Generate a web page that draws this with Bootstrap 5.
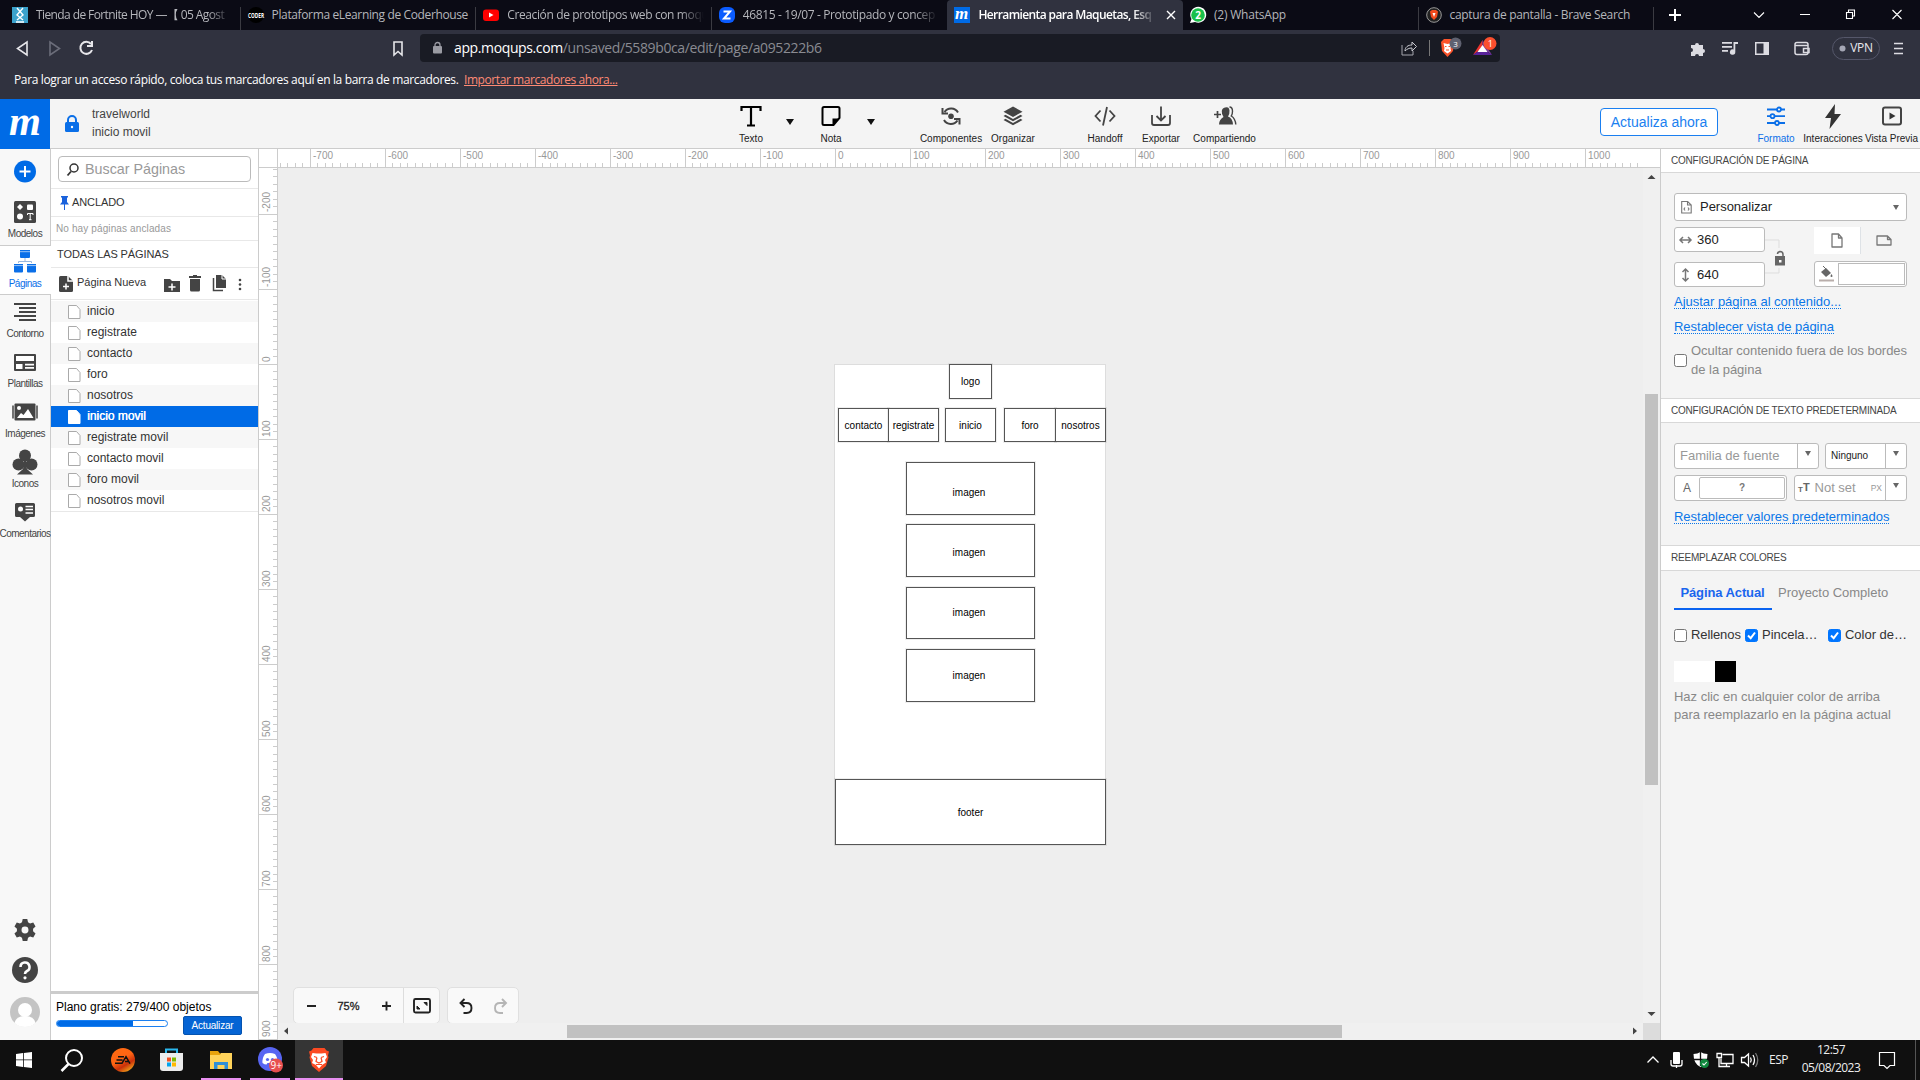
<!DOCTYPE html>
<html lang="es">
<head>
<meta charset="utf-8">
<title>Herramienta para Maquetas</title>
<link href="https://cdn.jsdelivr.net/npm/bootstrap@5.3.0/dist/css/bootstrap.min.css" rel="stylesheet">
<style>
body{width:1920px;height:1080px;overflow:hidden;font-family:"Liberation Sans",sans-serif;font-size:12px;line-height:1.2;color:#333;background:#eee}
svg{display:block;flex:none;overflow:visible}
.seg{font-family:"Open Sans","Noto Sans",sans-serif}
.nw{white-space:nowrap}
/* browser */
.tabs{height:30px;background:#0b0b15;padding-left:5px}
.tabx{width:235.6px;height:30px;padding:0 5px 0 7px;color:#b5b6bb;font-size:12px;position:relative;letter-spacing:-.37px}
.tabx .ttl{margin-left:8px;white-space:nowrap;flex:1}
.tabx.cut .ttl{-webkit-mask-image:linear-gradient(90deg,#000 86%,transparent 98%);mask-image:linear-gradient(90deg,#000 86%,transparent 98%)}
.tabx.sep::after{content:"";position:absolute;right:0;top:7px;bottom:0;width:1px;background:#3b3b42}
.tabx.on{background:#30323f;color:#fff;font-weight:600;border-radius:4px 4px 0 0;letter-spacing:-.6px}
.addr{height:36px;background:#30323f}
.url{width:1080px;height:28px;margin-left:16px;background:#191b24;border-radius:4px;color:#8a8b92;font-size:14px}
.bmk{height:33px;background:#30323f;color:#fff;font-size:12px;padding:7px 0 0 14px;letter-spacing:-.36px}
.bmk a{color:#ff8a75;letter-spacing:-.42px}
.vpn{width:48px;height:23px;border:1px solid #55576a;border-radius:12px;color:#e8e8ee;font-size:12px}
/* app header */
.apphd{height:50px;background:#f4f4f4;border-bottom:1px solid #ccc}
.logo{width:50px;height:50px;background:#006be6;color:#fff;font:italic bold 41px/44px "Liberation Serif",serif;text-align:center}
.tool{font-size:10px;color:#222;text-align:center;white-space:nowrap;display:flex;flex-direction:column;align-items:center;height:49px;padding-top:6px}
.tool svg{margin-bottom:6px}
.tool.blue{color:#0a6fe8}
.dn{width:0;height:0;border:4px solid transparent;border-top:6px solid #111;border-bottom:0}
.upg{width:118px;height:28px;border:1px solid #1a7ff0;border-radius:4px;background:#fff;color:#1a7ff0;font-size:14px;padding:0}
/* rail */
.work{height:891px}
.rail{width:51px;background:#f8f8f8;border-right:1px solid #ccc;font-size:10px;color:#444}
.ritem{height:50px;width:50px;display:flex;flex-direction:column;align-items:center;justify-content:flex-end;padding-bottom:5px;letter-spacing:-.5px;white-space:nowrap}
.ritem .ic{height:24px;display:flex;align-items:center;margin-bottom:4px}
.ritem.on{width:51px;background:#fff;border-top:1px solid #ccc;border-bottom:1px solid #ccc;color:#0a6fe8;padding:0 1px 4px 0}
/* pages */
.pages{width:207px;background:#fff}
.bb{border-bottom:1px solid #e8e8e8}
.srch{width:193px;height:26px;margin:6px 0 7px 7px;border:1px solid #bbb;border-radius:4px;font-size:14.3px;color:#999}
.prow{height:21px;padding-left:17px;color:#333}
.prow:nth-child(odd){background:#f7f7f7}
.prow.on{background:#006be6;color:#fff;text-shadow:.4px 0 #fff}
.plan{border-top:3px solid #ccc;height:49px;padding:6px 16px 0 5px;color:#000}
.pbar{width:112px;height:7px;border:1px solid #1a7ff0;border-radius:4px;background:#fff}
.pbar .progress-bar{background:#006be6}
.upd{width:59px;height:19px;background:#0564d4;border:1px solid #0453b0;border-radius:2px;color:#fff;font-size:10px;line-height:17px;text-align:center;letter-spacing:-.2px}
/* canvas */
.canv{position:relative;background:#eee;overflow:hidden}
.sheet{position:absolute;left:556px;top:196px;width:272px;height:481px;background:#fff;border:1px solid #ddd}
.bx{position:absolute;border:1px solid #555;background:#fff;color:#000;font-size:10px;display:flex;align-items:center;justify-content:center;outline:1px solid #0001}
.ctl{position:absolute;top:819px;height:37px;background:#f9f9f9;border:1px solid #e0e0e0;border-radius:5px;color:#222}
.vsc{width:17px;background:#f0f0f0}
.hsc{height:17px;background:#f0f0f0}
/* right panel */
.props{width:260px;background:#f4f4f4;border-left:1px solid #ccc;font-size:13px;letter-spacing:-.02px}
.sech{background:#fff;border-bottom:1px solid #d8d8d8;font-size:10px;letter-spacing:-.22px;color:#444;padding-left:10px;display:flex;align-items:center}
.fld{background:#fff;border:1px solid #bbb;border-radius:3px;display:flex;align-items:center;color:#222}
.ddv{width:21px;border-left:1px solid #bbb;height:100%;display:flex;justify-content:center;padding-top:7px}
.tri{width:0;height:0;border:3.5px solid transparent;border-top:5px solid #666;border-bottom:0}
.dlk{color:#0a76e8;border-bottom:1px dotted #0a76e8;line-height:16px;height:15px;align-self:flex-start;white-space:nowrap}
.ck{width:13px;height:13px;border:1px solid #767676;border-radius:2.5px;background:#fff;flex:none}
.ck.on{background:#0075ff;border-color:#0075ff}
/* taskbar */
.task{height:40px;background:#101010;color:#eee}
.tk{height:40px;display:flex;align-items:center;justify-content:center}
.run{border-bottom:2px solid #e88ff0;padding-top:2px}
</style>
<script src="https://cdn.jsdelivr.net/npm/bootstrap@5.3.0/dist/js/bootstrap.bundle.min.js"></script>
</head>
<body>
<div class="tabs d-flex seg">
  <div class="tabx sep cut d-flex align-items-center"><svg width="16" height="16"><rect width="16" height="16" fill="#3ba2cc"/><path d="M5 1l6 7-6 5M11 1L5 8l6 5M4 15h8" stroke="#fff" stroke-width="1.4" fill="none"/></svg><span class="ttl" style="letter-spacing:-.6px">Tienda de Fortnite HOY —【 05 Agost</span></div>
  <div class="tabx sep d-flex align-items-center"><svg width="16" height="16"><circle cx="8" cy="8" r="8" fill="#000"/><text x="0" y="11" font-size="7" font-weight="700" textLength="16" lengthAdjust="spacingAndGlyphs" fill="#fff" letter-spacing="0">CODER</text></svg><span class="ttl">Plataforma eLearning de Coderhouse</span></div>
  <div class="tabx sep cut d-flex align-items-center"><svg width="16" height="16"><rect y="2.500" width="16" height="11.500" rx="3" fill="#f00"/><path d="M6 5.500v5l4.500-2.500z" fill="#fff"/></svg><span class="ttl">Creación de prototipos web con moqu</span></div>
  <div class="tabx cut d-flex align-items-center"><svg width="16" height="16"><rect width="16" height="16" rx="6" fill="#0b5cff"/><path d="M4.500 4.500h6.500L5 11.500h6.500" stroke="#fff" stroke-width="2" fill="none"/></svg><span class="ttl">46815 - 19/07 - Prototipado y concep</span></div>
  <div class="tabx on cut d-flex align-items-center"><svg width="16" height="16"><rect width="16" height="16" fill="#006be6"/><text x="1" y="12" font-family="Liberation Serif" font-style="italic" font-weight="700" font-size="17" fill="#fff">m</text></svg><span class="ttl">Herramienta para Maquetas, Esq</span><svg width="8" height="8" style="margin:0 3px 0 8px"><path d="M0 0l8 8M8 0L0 8" stroke="#fff" stroke-width="1.400"/></svg></div>
  <div class="tabx sep d-flex align-items-center"><svg width="16" height="16"><path d="M0 16l1.500-4A8 8 0 1 1 5 15z" fill="#fff"/><circle cx="8" cy="8" r="6.800" fill="#19c04a"/><text x="5.200" y="11.800" font-size="10" font-weight="700" fill="#fff">2</text></svg><span class="ttl" style="letter-spacing:-.2px">(2) WhatsApp</span></div>
  <div class="tabx sep d-flex align-items-center"><svg width="16" height="16"><circle cx="8" cy="8" r="7.300" fill="#222" stroke="#999"/><path d="M4 4.500l2-1.500h4l2 1.500-1 5.500-3 3-3-3z" fill="#f24a1d"/><path d="M6.500 6h3L8 10z" fill="#fff"/></svg><span class="ttl" style="letter-spacing:-.33px">captura de pantalla - Brave Search</span></div>
  <svg width="265" height="30" fill="none" stroke="#fff"><path d="M15 15h12M21 9v12" stroke-width="2"/><path d="M100 12.500l5 5 5-5M146 14.500h10M192.500 12.500h6v6h-6zM194.500 12v-2h6v6h-2M238.500 10l9 9M247.500 10l-9 9" stroke-width="1.100"/></svg>
</div>
<div class="addr d-flex align-items-center seg">
  <svg width="404" height="36" fill="none" stroke="#e6e6ea" stroke-width="1.600"><path d="M27 12v13l-9.500-6.500z"/><path d="M50 12v13l9.500-6.500z" stroke="#6b6d7a"/><path d="M91 14a6 6 0 1 0 1 6M92 11v5h-5" stroke-width="2"/><path d="M394 12h8v13l-4-3.500-4 3.500z"/></svg>
  <div class="url d-flex align-items-center">
    <svg width="10" height="12" style="margin:0 11px 0 13px"><rect y="4" width="9" height="7.500" rx="1" fill="#9a9ba3"/><path d="M2 5V3a2.500 2.500 0 0 1 5 0v2" fill="none" stroke="#9a9ba3" stroke-width="1.300"/></svg>
    <span class="nw" style="letter-spacing:-.38px"><span class="text-white">app.moqups.com</span>/unsaved/5589b0ca/edit/page/a095222b6</span>
    <svg width="98" height="28" class="ms-auto" fill="none"><path d="M0 11v10h11v-4" stroke="#a5a6ad"/><path d="M3 17c0-4 3-6 7-6V8l4.500 4.500L10 17v-3c-3 0-5 1-7 3z" stroke="#c9cad0"/><path d="M27.500 6v16" stroke="#777"/>
      <path d="M39 8l3-3h7l3 3-1 9-5.500 6L40 17z" fill="#fb542b"/><path d="M41.500 9l4 1 4-1-1 5 .5 3-3.500 2.500-3.500-2.500.500-3z" fill="#fff"/><path d="M43 12.500h1.500M46.500 12.500H48M44 16h3" stroke="#fb542b"/><circle cx="53.500" cy="9.500" r="6" fill="#5f6170"/><text x="51.200" y="12.500" font-size="8" fill="#fff">3</text>
      <path d="M80.500 6l-9.500 15 9.500-7z" fill="#e8322d"/><path d="M80.500 6l9.500 15-9.500-7z" fill="#7d3c9b"/><path d="M71 21h19l-5.500-4h-8z" fill="#59239b"/><path d="M80.500 11l-5 7h10z" fill="#fff"/><circle cx="88" cy="9.500" r="6.500" fill="#fb4f2e"/><text x="85.700" y="13" font-size="9" fill="#fff">1</text></svg>
  </div>
  <svg width="332" height="36" fill="#dcdce2" stroke="none"><path d="M191 15h4a2 2 0 1 1 4 0h4v4a2 2 0 1 1 0 4v3h-4a2 2 0 0 0-4 0h-4v-4a2 2 0 0 0 0-4z"/><path d="M222 12h10v1.700h-10zM222 16h10v1.700h-10zM222 20h6v1.700h-6zM233.500 12h4.500v2h-2.700v8a2.700 2.700 0 1 1-1.800-2.500z"/><path d="M255 12h14v13h-14zm1.500 1.500v10h7v-10z" fill-rule="evenodd"/><g fill="none" stroke="#dcdce2" stroke-width="1.500"><rect x="295" y="12.500" width="13" height="12" rx="2"/><path d="M295 15.500h13M309 18.500h-5.500v4h5.500z"/></g></svg>
  <div class="vpn d-flex align-items-center justify-content-center nw" style="letter-spacing:-.3px"><svg width="7" height="7" class="me-1"><circle cx="3.500" cy="3.500" r="3" fill="#a5a7b5"/></svg>VPN</div>
  <svg width="40" height="36"><path d="M14 13.500h9M14 18.500h9M14 23.500h9" stroke="#dcdce2" stroke-width="1.700"/></svg>
</div>
<div class="bmk nw seg">Para lograr un acceso rápido, coloca tus marcadores aquí en la barra de marcadores.&nbsp; <a href="#">Importar marcadores ahora...</a></div>

<header class="apphd d-flex">
  <div class="logo">m</div>
  <svg width="42" height="49"><rect x="15" y="23" width="14" height="10" rx="1.500" fill="#0a6fe8"/><path d="M18 24v-3a4 4 0 0 1 8 0v3" fill="none" stroke="#0a6fe8" stroke-width="2"/><circle cx="22" cy="28" r="1.200" fill="#fff"/></svg>
  <div class="nw" style="width:639px;padding-top:7px;line-height:17.500px;color:#444">travelworld<br>inicio movil</div>
  <div class="tool" style="width:40px"><svg width="22" height="22"><path d="M1.500 6V2h19v4M11 2v18M7 20.500h8" fill="none" stroke="#000" stroke-width="2.200"/></svg>Texto</div>
  <div class="d-flex justify-content-center" style="width:38px;padding-top:20px"><i class="dn"></i></div>
  <div class="tool" style="width:44px"><svg width="20" height="22"><path d="M1.500 3.500q0-1.500 1.500-1.500h14q1.500 0 1.500 1.500V13l-6 7H3q-1.500 0-1.500-1.500z" fill="none" stroke="#000" stroke-width="2"/><path d="M11.500 20.500v-7h7z"/></svg>Nota</div>
  <div class="d-flex justify-content-center" style="width:36px;padding-top:20px"><i class="dn"></i></div>
  <div class="tool" style="width:62px;margin-left:31px"><svg width="20" height="22" fill="none" stroke="#444" stroke-width="2"><path d="M3.500 7A8 8 0 0 1 17 7.500M1.500 3v5.500H7M16.500 15.500A8 8 0 0 1 3 15M18.500 19.500V14H13"/><circle cx="10" cy="11.200" r="2.800" fill="#444" stroke="none"/></svg>Componentes</div>
  <div class="tool" style="width:62px"><svg width="20" height="22" fill="#444"><path d="M10 1.500l9.500 5.300L10 12 .5 6.800z"/><path d="M.5 11l2-1.200L10 14l7.500-4.200 2 1.200L10 16.300zM.5 15l2-1.200L10 18l7.500-4.200 2 1.200L10 20.300z"/></svg>Organizar</div>
  <div class="tool" style="width:60px;margin-left:31px"><svg width="22" height="22" fill="none" stroke="#444" stroke-width="1.800"><path d="M6.500 5.500L1.500 11l5 5.500M15.500 5.500l5 5.500-5 5.500M13 2L9 20.500"/></svg>Handoff</div>
  <div class="tool" style="width:52px"><svg width="20" height="22" fill="none" stroke="#444" stroke-width="1.800"><path d="M1 10v8q0 2 2 2h14q2 0 2-2v-8M10 1.500V15M5.500 11l4.500 4.500 4.500-4.500"/></svg>Exportar</div>
  <div class="tool" style="width:75px"><svg width="24" height="22" fill="#444"><path d="M1 9.500h7M4.500 6v7" stroke="#444" stroke-width="1.700"/><path d="M12 2.500q4-1.500 4.500 3 .3 3.500-1.500 6 4.500 1.500 5 8H6q0-5 4.500-7.500-2-3-1.700-6 .3-3 3.200-3.500z"/><path d="M16.500 2q3 0 3 4.200 0 3-1.200 4.800 4 2.500 4.500 8.500" fill="none" stroke="#444" stroke-width="1.400"/></svg>Compartiendo</div>
  <button class="btn upg" style="margin:9px 0 0 338px">Actualiza ahora</button>
  <div class="tool blue" style="width:44px;margin-left:36px"><svg width="18" height="22" fill="#f4f4f4" stroke="#0a6fe8" stroke-width="1.800"><path d="M0 4.500h18M0 11.200h18M0 18h18"/><circle cx="12" cy="4.500" r="2"/><circle cx="5.500" cy="11.200" r="2"/><circle cx="10" cy="18" r="2"/></svg>Formato</div>
  <div class="tool" style="width:58px;margin-left:6px"><svg width="18" height="22" fill="#333"><path d="M11-1L1 13h6L5.500 24 17 9h-6.500z"/></svg>Interacciones</div>
  <div class="tool" style="width:57px;margin-left:1px"><svg width="20" height="22"><rect x="1" y="2.500" width="18" height="17" rx="2" fill="none" stroke="#444" stroke-width="2"/><path d="M7.500 7.500v7l6-3.500z" fill="#333"/></svg>Vista Previa</div>
</header>

<div class="work d-flex">
  <nav class="rail d-flex flex-column">
    <div style="height:46px;padding:11px 0 0 14px"><svg width="22" height="22"><circle cx="11" cy="11.500" r="11" fill="#006be6"/><path d="M5.500 11.500h11M11 6v11" stroke="#fff" stroke-width="2"/></svg></div>
    <div class="ritem"><span class="ic"><svg width="22" height="22"><rect width="22" height="22" rx="1.500" fill="#444"/><path d="M6 3l3 3-3 3-3-3z" fill="#fff"/><rect x="13" y="3.500" width="6" height="5.500" rx="1" fill="#fff"/><circle cx="6" cy="15.500" r="3" fill="#fff"/><path d="M13.500 14v-1.500h5.500V14M16.200 12.500V19M15 18.700h2.500" stroke="#fff" fill="none"/></svg></span>Modelos</div>
    <div class="ritem on"><span class="ic"><svg width="22" height="24" fill="#0a6fe8"><path d="M6 0h10v7q0 1-1 1H7q-1 0-1-1zM0 14h9v7.500q0 1-1 1H1q-1 0-1-1zM13 14h9v7.500q0 1-1 1h-7q-1 0-1-1z"/><path d="M6 1.700h10M0 15.600h9M13 15.600h9" stroke="#fff" stroke-width=".6"/><path d="M4.500 13v-1.500h13V13M11 8v3.500" fill="none" stroke="#9ab8dd"/></svg></span>Páginas</div>
    <div class="ritem"><span class="ic"><svg width="22" height="18"><path d="M0 1h22M5 5h17M5 9h17M0 13h22M5 17h17" stroke="#444" stroke-width="2"/></svg></span>Contorno</div>
    <div class="ritem"><span class="ic"><svg width="22" height="17"><rect width="22" height="17" rx="1" fill="#444"/><path d="M2 2h18v5H2zM2 10h6.500v5H2zM11 9.800h9v1.600h-9zM11 13h9v1.800h-9z" fill="#fff"/></svg></span>Plantillas</div>
    <div class="ritem"><span class="ic"><svg width="26" height="18"><path d="M1 2.500v13M25 2.500v13" stroke="#444" stroke-width="1.500"/><rect x="2.500" y=".5" width="21" height="17" rx="1" fill="#444"/><circle cx="7" cy="5" r="2" fill="#fff"/><path d="M5 15l4-5 2.500 2L16 6l5.500 9z" fill="#fff"/></svg></span>Imágenes</div>
    <div class="ritem"><span class="ic"><svg width="26" height="26" fill="#444"><circle cx="13" cy="6.500" r="6"/><circle cx="6.500" cy="15.500" r="6"/><circle cx="19.500" cy="15.500" r="6"/><path d="M12 10h2v5l1 5 6 5.500H5L11 20l1-5z"/></svg></span>Iconos</div>
    <div class="ritem"><span class="ic"><svg width="20" height="19"><path d="M1.500 0h17q1.500 0 1.500 1.500v11q0 1.500-1.500 1.500H15l-5 4.500L5 14H1.500Q0 14 0 12.500v-11Q0 0 1.500 0z" fill="#444"/><circle cx="5.500" cy="6" r="2.500" fill="#fff"/><path d="M10.500 3.500H18M10.500 6.500H18M10.500 10H18" stroke="#fff" stroke-width="1.300"/></svg></span>Comentarios</div>
    <div class="mt-auto d-flex flex-column align-items-center" style="height:121px;width:50px">
      <svg width="22" height="22" viewBox="0 0 24 24"><path fill="#444" fill-rule="evenodd" d="M9.500 0h5l.8 3.600 2.200 1.300 3.500-1.200 2.500 4.400-2.700 2.400v2.900l2.700 2.500-2.500 4.300-3.500-1.100-2.200 1.300-.8 3.600h-5l-.8-3.600-2.200-1.300L3 20.200.5 15.900l2.700-2.500v-2.900L.5 8.100 3 3.700l3.500 1.200 2.200-1.300zM12 8.200a3.800 3.800 0 1 0 0 7.600 3.800 3.800 0 0 0 0-7.600z"/></svg>
      <svg width="26" height="26" style="margin-top:16px"><circle cx="13" cy="13" r="13" fill="#444"/><path d="M8.500 10a4.500 4.500 0 1 1 6.500 4q-2 1-2 3" fill="none" stroke="#fff" stroke-width="2.600"/><circle cx="13" cy="20.800" r="1.600" fill="#fff"/></svg>
      <svg width="30" height="30" style="margin-top:14px"><circle cx="15" cy="15" r="15" fill="#c4c4c4"/><circle cx="15" cy="13" r="7" fill="#fff"/><path d="M4.500 26Q6 19 15 19t10.500 7q-4 4-10.500 4T4.500 26z" fill="#fff"/></svg>
    </div>
  </nav>

  <aside class="pages d-flex flex-column">
    <div class="bb" style="height:40px;padding-top:1px"><div class="srch d-flex align-items-center" style="padding-top:1px"><svg width="26" height="22"><circle cx="15" cy="9" r="4" fill="none" stroke="#333" stroke-width="1.500"/><path d="M12 12.500l-3.500 4" stroke="#333" stroke-width="1.800"/></svg>Buscar Páginas</div></div>
    <div class="bb d-flex align-items-center" style="height:28px;font-size:11px;padding-left:9px;letter-spacing:-.1px"><svg width="9" height="14" style="margin-right:3px"><path d="M1 0h7v1.500H7V6l2 2.500H0L2 6V1.500H1zM4 8.500h1V14H4z" fill="#1a62dc"/></svg>ANCLADO</div>
    <div class="bb d-flex align-items-center" style="height:24px;font-size:10px;padding-left:5px;color:#999;letter-spacing:.12px">No hay páginas ancladas</div>
    <div class="bb d-flex align-items-center" style="height:27px;font-size:11px;padding:2px 0 0 6px;letter-spacing:-.1px">TODAS LAS PÁGINAS</div>
    <div class="bb d-flex align-items-center" style="height:32px;font-size:11px;padding:0 12px 2px 8px">
      <svg width="14" height="16" style="margin:2px 4px 0 0"><path d="M1.500 0H9l5 5v9.500q0 1.500-1.500 1.500h-11Q0 16 0 14.500v-13Q0 0 1.500 0z" fill="#444"/><path d="M9 0v5h5M4 10.500h6M7 7.500v6" stroke="#fff" stroke-width="1.500" fill="none"/></svg><span class="nw">Página Nueva</span>
      <svg width="82" height="18" class="ms-auto" fill="#444"><path d="M0 5h6l2 2h8v11H0z"/><path d="M4.500 13h7M8 9.500v7" stroke="#fff" stroke-width="1.500"/><path d="M25 2h4V1h4v1h4v2H25zM26 5h10v11q0 1.500-1.500 1.500h-7Q26 17.500 26 16z"/><path d="M52 1h6l4 4v9H52z"/><path d="M49.500 4v12.500H59" fill="none" stroke="#444" stroke-width="1.500"/><path d="M58 1v4h4" fill="none" stroke="#fff"/><circle cx="76" cy="6" r="1.300"/><circle cx="76" cy="10.500" r="1.300"/><circle cx="76" cy="15" r="1.300"/></svg></div>
    <div style="padding-top:1px" class="flex-grow-1"><div id="plist" class="bb"></div></div>
    <div class="plan"><div class="nw">Plano gratis: 279/400 objetos</div>
      <div class="d-flex justify-content-between"><div class="progress pbar" style="margin-top:6px"><div class="progress-bar" style="width:69%"></div></div><div class="upd" style="margin-top:2px">Actualizar</div></div></div>
  </aside>

  <main class="d-flex flex-column" style="width:1402px">
    <svg id="hrul" width="1402" height="19" style="background:#fff"></svg>
    <div class="d-flex" style="height:872px">
      <svg id="vrul" width="20" height="872" style="background:#fff"></svg>
      <div style="width:1365px">
        <div class="canv" style="height:855px">
          <div class="sheet"></div><div id="nodes"></div>
          <div class="ctl d-flex align-items-center" style="left:15px;width:147px"><svg width="146" height="35" fill="none" stroke="#222" stroke-width="1.900"><path d="M13 18h9M88 18h9M92.500 13.500v9"/><path d="M109.500 0v35" stroke="#ddd" stroke-width="1"/><rect x="120" y="11" width="16" height="13.500" rx="1.500"/><path d="M130 14.500h3v3zM123 18v3h3z" stroke-width="1" fill="#222"/><text x="43.500" y="21.500" font-size="11" stroke="#222" stroke-width=".3" fill="#222">75%</text></svg></div>
          <div class="ctl" style="left:169px;width:72px"><svg width="70" height="35" fill="none" stroke="#222" stroke-width="1.900"><path d="M16.500 11l-4 4 4 4M13 15H18.500q5 0 5 5t-5 5h-3"/><path d="M54 11l4 4-4 4M57.500 15H52q-5 0-5 5t5 5h3" stroke="#b5b5b5"/></svg></div>
        </div>
        <div class="hsc"><svg width="1365" height="17" fill="#444"><path d="M10 4.500v7L6 8zM1355 4.500v7l4-3.500z"/><rect x="289" y="2" width="775" height="13" fill="#c1c1c1"/></svg></div>
      </div>
      <div class="vsc"><svg width="17" height="872" fill="#444"><path d="M4.500 11h8l-4-4zM4.500 844h8l-4 4z"/><rect x="2" y="226" width="13" height="391" fill="#c1c1c1"/><path d="M0 855h17v17H0z" fill="#dcdcdc"/></svg></div>
    </div>
  </main>

  <aside class="props">
    <div class="sech" style="height:24px">CONFIGURACIÓN DE PÁGINA</div>
    <div class="d-flex flex-column" style="height:225px;padding:20px 13px 0 13px">
      <div class="fld" style="height:28px;padding:0 7px 0 6px"><svg width="11" height="14" class="me-2" fill="none" stroke="#777"><path d="M.7 1.500h6l3.500 3.500v8H.7zM6.500 1.500V5H10M4 7.500L3 9l1 1.500M7 7.500L8 9l-1 1.500" stroke-width="1.100"/></svg>Personalizar<i class="tri ms-auto"></i></div>
      <div class="d-flex" style="margin-top:6px">
        <div><div class="fld" style="width:91px;height:25px"><svg width="22" height="14" fill="none" stroke="#777" stroke-width="1.500"><path d="M6 7h9M8 4L5 7l3 3M13 4l3 3-3 3"/></svg>360</div>
        <div class="fld" style="width:91px;height:25px;margin-top:10px"><svg width="22" height="14" fill="none" stroke="#777" stroke-width="1.500"><path d="M10.500 2v10M7.500 4l3-3 3 3M7.500 10l3 3 3-3"/></svg>640</div></div>
        <svg width="49" height="60"><path d="M0 13h14v8M0 46h14v-5" fill="none" stroke="#ddd"/><path d="M10 29h10v9.500H10z" fill="#666"/><path d="M12.500 27q0-2 2.500-2.500 3 0 3 3V29" fill="none" stroke="#666" stroke-width="1.500"/><rect x="14" y="33" width="2.500" height="2.500" fill="#fff"/></svg>
        <div><div class="d-flex" style="height:27px"><div class="bg-white border-end d-flex align-items-center justify-content-center" style="width:47px"><svg width="12" height="15"><path d="M1 1h6.500L11 5v9H1zM7.500 1v4H11" fill="none" stroke="#777" stroke-width="1.300" stroke-linejoin="round"/></svg></div><div class="d-flex align-items-center justify-content-center flex-grow-1"><svg width="16" height="11"><path d="M1 1h10.500L15 4.500V10H1zM11.500 1v3.500H15" fill="none" stroke="#777" stroke-width="1.300" stroke-linejoin="round"/></svg></div></div>
        <div class="fld" style="width:93px;height:26px;margin-top:7px"><svg width="23" height="24"><path d="M6 10l5-4 5 5-5 4z" fill="#666"/><path d="M8 4l3 3" stroke="#666"/><path d="M16.500 12q2 3 0 3t0-3z" fill="#666"/><path d="M4 18.500h15" stroke="#b9aeab" stroke-width="2"/></svg><div style="width:67px;height:22px;border:1px solid #bbb"></div></div></div>
      </div>
      <a class="dlk text-decoration-none" style="margin-top:7px">Ajustar página al contenido...</a>
      <a class="dlk text-decoration-none" style="margin-top:10px">Restablecer vista de página</a>
      <div class="d-flex align-items-center" style="margin-top:7px;color:#888;line-height:19px"><span class="ck"></span><span class="nw" style="margin-left:4px">Ocultar contenido fuera de los bordes<br>de la página</span></div>
    </div>
    <div class="sech" style="height:25px;border-top:1px solid #d8d8d8">CONFIGURACIÓN DE TEXTO PREDETERMINADA</div>
    <div class="d-flex flex-column" style="height:122px;padding:20px 13px 0 13px">
      <div class="d-flex justify-content-between"><div class="fld" style="width:145px;height:26px;color:#999;padding-left:5px"><span class="nw">Familia de fuente</span><span class="ddv ms-auto"><i class="tri"></i></span></div><div class="fld" style="width:82px;height:26px;padding-left:5px;font-size:10px">Ninguno<span class="ddv ms-auto"><i class="tri"></i></span></div></div>
      <div class="d-flex justify-content-between" style="margin-top:6px"><div class="fld" style="width:113px;height:26px;color:#666;font-size:12px"><span style="width:24px;text-align:center">A</span><div class="d-flex align-items-center justify-content-center fw-bold" style="width:86px;height:22px;border:1px solid #bbb;border-radius:2px;font-size:10px;color:#777">?</div></div>
      <div class="fld" style="width:113px;height:26px;color:#999"><b style="font-size:8px;margin-left:3px;line-height:13px;padding-top:3px;color:#666">T</b><b style="font-size:11px;color:#666">T</b><span class="nw" style="margin-left:5px">Not set</span><span class="ms-auto" style="font-size:8.500px;margin-right:3px">PX</span><span class="ddv"><i class="tri"></i></span></div></div>
      <a class="dlk text-decoration-none" style="margin-top:8px">Restablecer valores predeterminados</a>
    </div>
    <div class="sech" style="height:26px;border-top:1px solid #d8d8d8">REEMPLAZAR COLORES</div>
    <div style="padding:12px 0 0 13px">
      <div class="d-flex" style="height:27px;color:#888"><div class="nw fw-bold text-center" style="width:98px;height:27px;border-bottom:2px solid #0a63f0;color:#1a66ee;padding:2px 1px 0 0;letter-spacing:-.1px">Página Actual</div><div class="nw" style="padding:2px 0 0 6px">Proyecto Completo</div></div>
      <div class="d-flex align-items-center nw" style="margin-top:17px;height:16px"><span class="ck"></span><span style="width:54px;margin-left:4px;letter-spacing:-.1px">Rellenos</span><svg class="ck on"><path d="M2 5.500l2.700 2.700L9 2.500" stroke="#fff" stroke-width="2" fill="none"/></svg><span style="width:66px;margin-left:4px">Pincela…</span><svg class="ck on"><path d="M2 5.500l2.700 2.700L9 2.500" stroke="#fff" stroke-width="2" fill="none"/></svg><span style="margin-left:4px">Color de…</span></div>
      <div class="d-flex" style="margin-top:18px;height:21px"><div class="bg-white" style="width:41px"></div><div class="bg-black" style="width:21px"></div></div>
      <div class="nw" style="margin-top:6px;line-height:18px;color:#888">Haz clic en cualquier color de arriba<br>para reemplazarlo en la página actual</div>
    </div>
  </aside>
</div>

<footer class="task d-flex seg">
  <div class="tk" style="width:48px"><svg width="16" height="16" fill="#fff"><path d="M0 2l7-1v6.500H0zM7.800.9L16 0v7.500H7.800zM0 8.300h7V15l-7-1zM7.800 8.300H16V16l-8.200-1z"/></svg></div>
  <div class="tk" style="width:48px"><svg width="22" height="22" fill="none" stroke="#fff"><circle cx="13" cy="9" r="8" stroke-width="2"/><path d="M7.500 15L.5 22" stroke-width="2.500"/></svg></div>
  <div class="tk" style="width:54px"><svg width="24" height="24"><defs><linearGradient id="g" x1=".2" y1="0" x2=".8" y2="1"><stop offset="0" stop-color="#ff6a10"/><stop offset=".45" stop-color="#ff6414"/><stop offset=".7" stop-color="#c9300a"/><stop offset="1" stop-color="#f7b51c"/></linearGradient></defs><circle cx="12" cy="12" r="12" fill="url(#g)"/><path d="M7 8.800h6M5.500 12h6M4 15.200h7l4-6.500 4 7M14 13.600h3.500" stroke="#111" stroke-width="1.500" fill="none"/></svg></div>
  <div class="tk" style="width:43px"><svg width="23" height="24"><path d="M6 6V1.500h11V6" fill="none" stroke="#2bb8ee" stroke-width="2"/><path d="M0 5h23v15q0 3-3 3H3q-3 0-3-3z" fill="#ececec"/><path d="M7 9.500h4v4H7z" fill="#f25022"/><path d="M12 9.500h4v4h-4z" fill="#7fba00"/><path d="M7 14.500h4v4H7z" fill="#00a4ef"/><path d="M12 14.500h4v4h-4z" fill="#ffb900"/></svg></div>
  <div class="tk run" style="width:40px;margin:0 9px 0 8px"><svg width="22" height="19"><path d="M0 0h8l2 2.500h12V6H0z" fill="#e8a30c"/><path d="M0 4h10l1-2h11v16H0z" fill="#ffd35a"/><path d="M4 18v-7h14v7h-3.500v-4h-7v4z" fill="#2f8fd8"/></svg></div>
  <div class="tk run" style="width:40px;margin-right:5px"><svg width="25" height="26"><circle cx="12" cy="12" r="12" fill="#5865f2"/><path d="M7 7q5-2 10 0 3 4 2.500 9-2 1.500-4 1.500l-1-1.500h-5l-1 1.500q-2 0-4-1.500Q4 11 7 7z" fill="#fff"/><circle cx="9.500" cy="12.500" r="1.600" fill="#5865f2"/><circle cx="14.500" cy="12.500" r="1.600" fill="#5865f2"/><circle cx="18" cy="18.500" r="7" fill="#e84f4f"/><text x="12.500" y="22" font-size="10" fill="#fff">9+</text></svg></div>
  <div class="tk run" style="width:48px;background:#353535"><svg width="20" height="24"><path d="M4.500 0h11l2 2.500 2.500 1-1 4 .5 2L17 18l-7 6-7-6L.5 9.500l.5-2-1-4 2.500-1z" fill="#fb4a22"/><path d="M3.500 5l4 .5h5l4-.5 1.500 4-2 3 1 2.500-4 2.500-3 3.500-3-3.500L3 15l1-3-2-3z" fill="#fff"/><path d="M5 8.500l3 1M15 8.500l-3 1M8 9.500l-1 4 3 1.500 3-1.500-1-4M7 16.500h6" stroke="#fb4a22" fill="none" stroke-width="1.200"/></svg></div>
  <svg width="129" height="40" class="ms-auto" fill="none" stroke="#fff" stroke-width="1.300"><path d="M7.500 22.500l5.500-5.500 5.500 5.500"/><rect x="33" y="12" width="7" height="12" rx="1" fill="#fff" stroke="none"/><path d="M31 20v4q0 2 2 2h7q2 0 2-2v-4M36.500 25v3" /><path d="M53.500 14q4 0 7-2 3 2 7 2 0 10-7 13-7-3-7-13z" fill="#fff" stroke="none"/><path d="M60.500 12v14M53 19.500h15" stroke="#101010"/><circle cx="64.500" cy="23.500" r="4.500" fill="#10893e" stroke="none"/><path d="M62.500 23.500l1.500 1.500 2.700-3" stroke-width="1.100"/><path d="M82.500 14.500H93v9H81v-5M77 13.500h4.500v4H77zM79 18v8.500h11M86.500 24v2.500"/><path d="M101.500 17.500h3l4-3.500v12l-4-3.500h-3zM110.500 17.500q1.500 2.500 0 5M113 15q3 5 0 10"/><path d="M115.500 13q4.500 7 0 14" stroke="#777"/></svg>
  <div class="d-flex align-items-center nw" style="width:31px;font-size:12px;letter-spacing:-.5px">ESP</div>
  <div class="text-center nw" style="width:62px;font-size:12px;line-height:18px;padding-top:1px;letter-spacing:-.5px">12:57<br>05/08/2023</div>
  <svg width="58" height="40"><path d="M17.500 12.500h15v13h-4.500l-3 3-3-3h-4.500z" fill="none" stroke="#fff" stroke-width="1.200"/><path d="M53.500 0v40" stroke="#555"/></svg>
</footer>
<script>
// page list
document.getElementById('plist').innerHTML=['inicio','registrate','contacto','foro','nosotros','inicio movil','registrate movil','contacto movil','foro movil','nosotros movil'].map((n,i)=>
 `<div class="prow d-flex align-items-center ${i==5?'on':''}"><svg width="12" height="14" style="margin-right:7px"><path d="M.5.5h8l3.500 4v9H.5z" fill="#fff" stroke="${i==5?'#fff':'#aaa'}"/></svg>${n}</div>`).join('');
// rulers: 100 units = 75px
let h='<path d="M19.500 0v19M0 18.500h1402M.5 0v19" stroke="#ccc"/>';
for(let k=-74;k<=109;k++){const x=Math.floor(577+k*7.5)+.5;if(x<20||x>1384)continue;h+=`<path d="M${x} ${k%10?14:0}V19" stroke="#ccc"/>`;if(k%10==0)h+=`<text x="${x+2.500}" y="10" font-size="10" fill="#999">${k*10}</text>`}
document.getElementById('hrul').innerHTML=h;
let v='<path d="M.5 0v872M19.500 0v872" stroke="#ccc"/>';
for(let k=-26;k<=90;k++){const y=Math.floor(196+k*7.5)+.5;if(y<0)continue;v+=`<path d="M${k%10?15:0} ${y}H19" stroke="#ccc"/>`;if(k%10==0)v+=`<text transform="translate(11.500 ${y-2.500}) rotate(-90)" font-size="10" fill="#999">${k*10}</text>`}
document.getElementById('vrul').innerHTML=v;
// wireframe nodes: text, x, y, w, h, padding top, padding right
document.getElementById('nodes').innerHTML=[['logo',671,196,43,35,0,0],['contacto',560,240,51,34,2,0],['registrate',610,240,51,34,2,0],['inicio',667,240,51,34,2,0],['foro',726,240,52,34,2,0],['nosotros',777,240,51,34,2,0],['imagen',628,294,129,53,8,3],['imagen',628,356,129,53,5,3],['imagen',628,419,129,52,0,3],['imagen',628,481,129,53,1,3],['footer',557,611,271,66,2,0]].map(a=>
 `<div class="bx" style="left:${a[1]}px;top:${a[2]}px;width:${a[3]}px;height:${a[4]}px;padding:${a[5]}px ${a[6]}px 0 0">${a[0]}</div>`).join('');
</script>
</body>
</html>
